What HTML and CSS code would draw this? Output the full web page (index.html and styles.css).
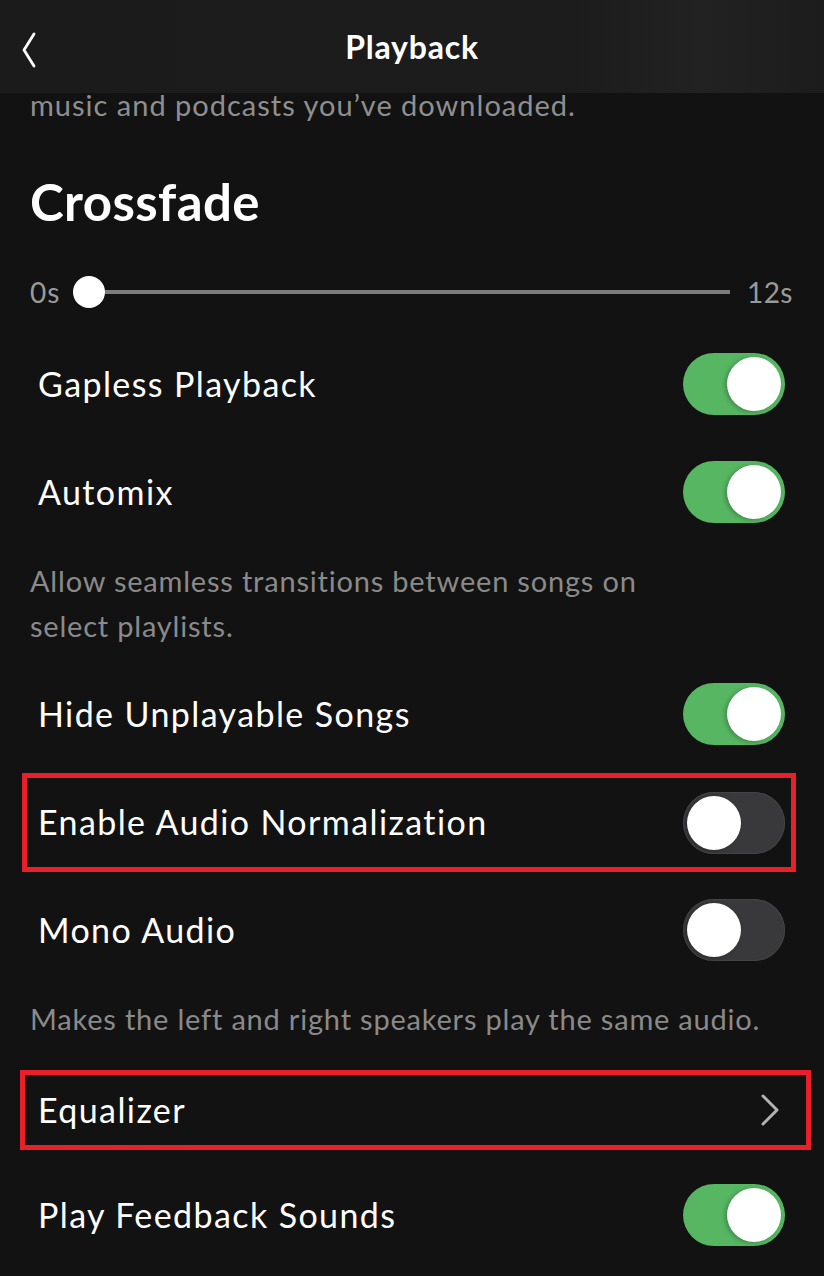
FILE: index.html
```html
<!DOCTYPE html>
<html>
<head>
<meta charset="utf-8">
<link rel="stylesheet" href="styles.css">
</head>
<body>
<header class="topbar">
  <svg class="back" width="16" height="36" viewBox="0 0 16 36"><path d="M13 2 L3 18 L13 34" fill="none" stroke="#fff" stroke-width="2.8" stroke-linecap="round" stroke-linejoin="round"/></svg>
  <h1 class="title">Playback</h1>
</header>
<main class="content">
  <p class="cut">music and podcasts you’ve downloaded.</p>
  <h2 class="section">Crossfade</h2>
  <div class="slider">
    <span class="slabel">0s</span>
    <div class="track"><span class="thumb"></span><span class="line"></span></div>
    <span class="slabel">12s</span>
  </div>
  <div class="row"><span class="label">Gapless Playback</span><span class="switch on"><span class="knob"></span></span></div>
  <div class="row"><span class="label">Automix</span><span class="switch on"><span class="knob"></span></span></div>
  <p class="desc">Allow seamless transitions between songs on<br>select playlists.</p>
  <div class="row"><span class="label">Hide Unplayable Songs</span><span class="switch on"><span class="knob"></span></span></div>
  <div class="row marked"><span class="label">Enable Audio Normalization</span><span class="switch"><span class="knob"></span></span></div>
  <div class="row"><span class="label">Mono Audio</span><span class="switch"><span class="knob"></span></span></div>
  <p class="desc">Makes the left and right speakers play the same audio.</p>
  <div class="row link marked2"><span class="label">Equalizer</span>
    <svg class="chev" width="20" height="34" viewBox="0 0 20 34"><path d="M3 3 L17 17 L3 31" fill="none" stroke="#b3b3b3" stroke-width="3" stroke-linecap="round" stroke-linejoin="round"/></svg>
  </div>
  <div class="row"><span class="label">Play Feedback Sounds</span><span class="switch on"><span class="knob"></span></span></div>
</main>
</body>
</html>
```
FILE: styles.css
```css
html, body {
  margin: 0;
  padding: 0;
  background: #121212;
  font-family: "Lato", "Noto Sans", sans-serif;
  color: #fff;
}
body {
  width: 824px;
  height: 1276px;
  overflow: hidden;
}
.topbar {
  height: 93px;
  display: flex;
  align-items: center;
  justify-content: center;
  position: relative;
  background: linear-gradient(90deg, #1b1b1b 0%, #1c1c1c 70%, #222 85%, #1c1c1c 100%);
  z-index: 2;
}
.back {
  position: absolute;
  left: 21px;
  top: 32px;
}
.title {
  margin: 0;
  font-size: 32px;
  font-weight: 700;
  letter-spacing: 0.8px;
}
.content {
  display: flex;
  flex-direction: column;
}
.cut {
  margin: 0;
  padding-left: 30px;
  font-size: 29px;
  line-height: 24px;
  height: 24px;
  letter-spacing: 1px;
  color: #8f8f8f;
  white-space: nowrap;
}
.section {
  margin: 55px 0 0;
  padding: 0 0 22px 30px;
  font-size: 51px;
  line-height: 60px;
  font-weight: 700;
  letter-spacing: 0.4px;
}
.slider {
  height: 76px;
  display: flex;
  align-items: center;
  padding: 0 31px 0 30px;
  gap: 13px;
}
.slabel {
  font-size: 28px;
  letter-spacing: 0.5px;
  color: #9a9a9a;
}
.slabel:first-child {
  letter-spacing: 1px;
}
.track {
  flex: 1;
  display: flex;
  align-items: center;
  margin-right: 4px;
}
.thumb {
  width: 32px;
  height: 32px;
  border-radius: 50%;
  background: #fff;
  flex: none;
}
.line {
  flex: 1;
  height: 4px;
  background: #7c7c7c;
}
.row {
  height: 108px;
  box-sizing: border-box;
  display: flex;
  align-items: center;
  justify-content: space-between;
  padding: 0 39px 0 38px;
}
.label {
  font-size: 34px;
  letter-spacing: 1.4px;
  color: #fff;
  padding-bottom: 2px;
}
.switch {
  width: 102px;
  height: 62px;
  border-radius: 31px;
  background: #39393c;
  box-sizing: border-box;
  padding: 4px;
  display: flex;
  justify-content: flex-start;
  box-shadow: inset 0 0 0 1px #444;
}
.switch.on {
  background: #56b662;
  justify-content: flex-end;
  box-shadow: none;
}
.knob {
  width: 54px;
  height: 54px;
  border-radius: 50%;
  background: #fff;
  box-shadow: -2px 1px 4px rgba(0,0,0,0.25);
}
.desc {
  margin: 0;
  padding: 12px 0 12px 30px;
  font-size: 29px;
  line-height: 45px;
  letter-spacing: 0.8px;
  color: #8a8a8a;
  white-space: nowrap;
}
.marked {
  height: 99px;
  margin: 5px 28px 4px 22px;
  border: 5px solid #e8202a;
  padding: 0 6px 0 11px;
}
.marked2 {
  height: 80px;
  margin: 17px 13px 11px 20px;
  border: 5px solid #e8202a;
  padding: 0 26px 0 13px;
}
.chev {
  display: block;
}
```
